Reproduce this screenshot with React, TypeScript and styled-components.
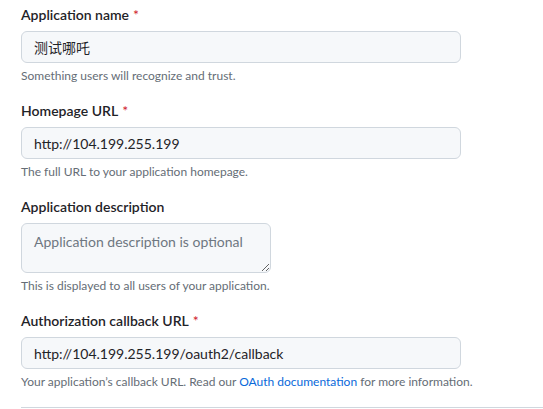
import React from 'react';
import styled, { createGlobalStyle } from 'styled-components';

const GlobalStyle = createGlobalStyle`
  html, body {
    margin: 0;
    padding: 0;
    background: #ffffff;
    overflow: hidden;
  }
  body {
    font-family: Lato, 'Noto Sans CJK SC', sans-serif;
    color: #1f2328;
  }
`;

const Form = styled.form`
  display: flex;
  flex-direction: column;
  gap: 16px;
  padding: 5px 0 0 21px;
`;

const Group = styled.div`
  display: flex;
  flex-direction: column;
`;

const Label = styled.label`
  font-size: 14px;
  font-weight: 600;
  line-height: 20px;
  margin-bottom: 6px;
  color: #1f2328;
`;

const Required = styled.span`
  color: #cf222e;
  margin-left: 4px;
  font-weight: 400;
`;

const TextInput = styled.input<{ $width?: number }>`
  box-sizing: border-box;
  width: ${(p) => p.$width ?? 440}px;
  height: 32px;
  padding: 5px 12px;
  font-family: inherit;
  font-size: 14px;
  line-height: 20px;
  color: #1f2328;
  background-color: #f6f8fa;
  border: 1px solid #d0d7de;
  border-radius: 6px;
  outline: none;
`;

const TextArea = styled.textarea`
  box-sizing: border-box;
  display: block;
  width: 250px;
  height: 50px;
  padding: 8px 12px;
  font-family: inherit;
  font-size: 14px;
  line-height: 20px;
  color: #1f2328;
  background-color: #f6f8fa;
  border: 1px solid #d0d7de;
  border-radius: 6px;
  outline: none;
  resize: vertical;

  &::placeholder {
    color: #6e7781;
  }
`;

const Note = styled.p`
  margin: 4px 0 0;
  font-size: 12px;
  line-height: 18px;
  color: #656d76;
`;

const Link = styled.a`
  color: #0969da;
  text-decoration: none;
`;

const Divider = styled.hr`
  height: 0;
  margin: 0;
  border: none;
  border-top: 1px solid #d0d7de;
`;

export default function App() {
  return (
    <>
      <GlobalStyle />
      <Form onSubmit={(e) => e.preventDefault()}>
        <Group>
          <Label>
            Application name<Required>*</Required>
          </Label>
          <TextInput defaultValue="测试哪吒" />
          <Note>Something users will recognize and trust.</Note>
        </Group>
        <Group>
          <Label>
            Homepage URL<Required>*</Required>
          </Label>
          <TextInput defaultValue="http://104.199.255.199" />
          <Note>The full URL to your application homepage.</Note>
        </Group>
        <Group>
          <Label>Application description</Label>
          <TextArea placeholder="Application description is optional" />
          <Note>This is displayed to all users of your application.</Note>
        </Group>
        <Group>
          <Label>
            Authorization callback URL<Required>*</Required>
          </Label>
          <TextInput defaultValue="http://104.199.255.199/oauth2/callback" />
          <Note>
            Your application’s callback URL. Read our{' '}
            <Link href="#">OAuth documentation</Link> for more information.
          </Note>
        </Group>
        <Divider />
      </Form>
    </>
  );
}
